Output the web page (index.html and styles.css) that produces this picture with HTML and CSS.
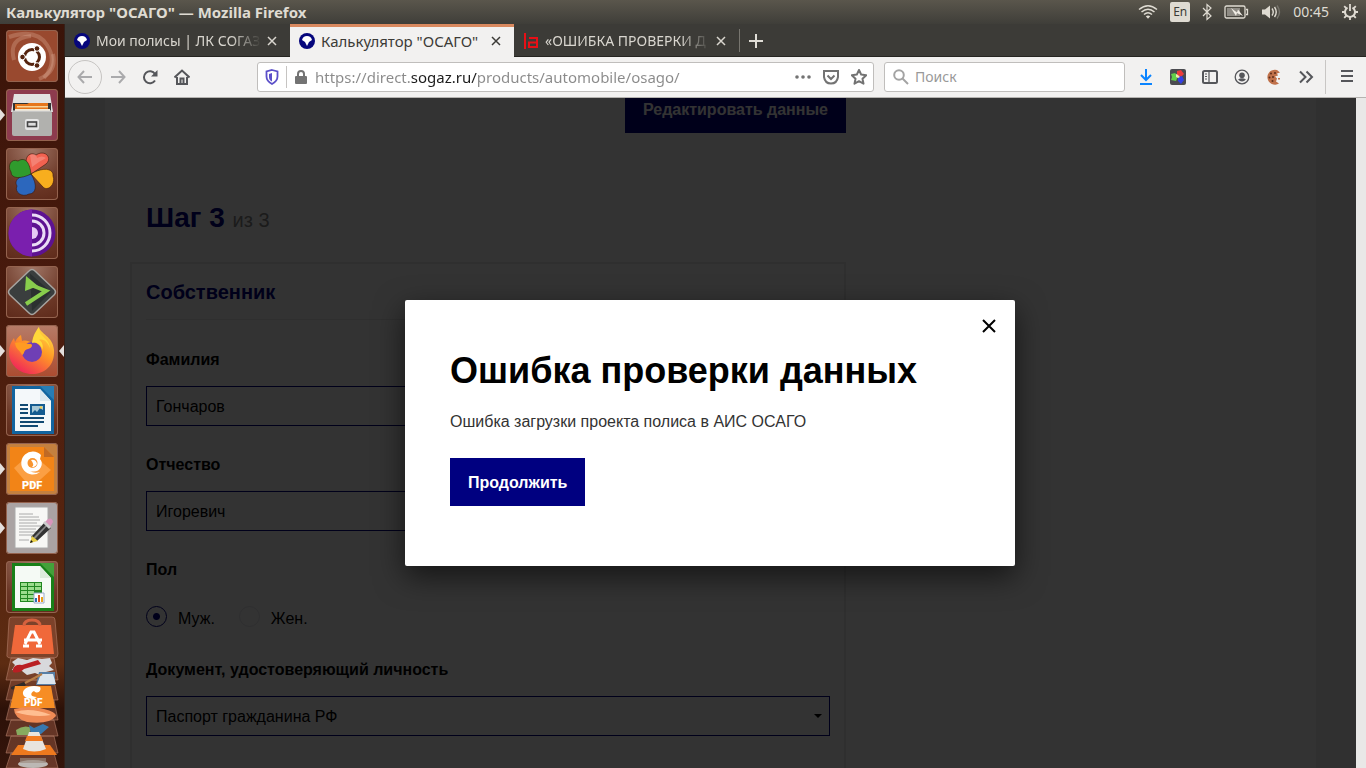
FILE: index.html
```html
<!DOCTYPE html>
<html lang="ru">
<head>
<meta charset="utf-8">
<title>Калькулятор "ОСАГО"</title>
<link rel="stylesheet" href="styles.css">
</head>
<body class="desktop">
<header class="topbar">
  <span class="topbar-title">Калькулятор "ОСАГО" — Mozilla Firefox</span>
  <div class="indicators">
    <svg class="ind-wifi" width="20" height="16" viewBox="0 0 20 16" fill="none" stroke="#dfdbd2" stroke-width="1.5"><path d="M1 5.500Q10-2 19 5.500M3.500 8Q10 2.500 16.500 8M6 10.500Q10 7 14 10.500"/><path d="M7.800 12.300Q10 10.500 12.200 12.300L10 14.800z" fill="#dfdbd2" stroke="none"/></svg>
    <span class="ind-lang">En</span>
    <svg width="10" height="18" viewBox="0 0 10 18" fill="none" stroke="#dfdbd2" stroke-width="1.200"><path d="M1 5l8 8-4 3.500v-15L9 5l-8 8"/></svg>
    <svg width="25" height="14" viewBox="0 0 25 14" fill="none" stroke="#dfdbd2" stroke-width="1.300"><rect x="1" y="1" width="20" height="12" rx="1.500"/><path d="M22 4.500h1.500v5H22"/><path d="M3 3h13v8H3z" fill="#8e8b84" stroke="none"/><path d="M7 3l6 4.500 1-3L19 11l-6-3-1 3z" fill="#f0ece4" stroke="none"/></svg>
    <svg width="20" height="16" viewBox="0 0 20 16"><path d="M1 5.500h3L9 1.500v13L4 10.500H1z" fill="#dfdbd2"/><g fill="none" stroke-width="1.400"><path d="M11 4.500Q13.500 8 11 11.500M13.500 3Q17 8 13.500 13" stroke="#dfdbd2"/><path d="M16 1.500Q21 8 16 14.500" stroke="#77746d"/></g></svg>
    <time class="clock">00:45</time>
    <svg width="18" height="18" viewBox="0 0 18 18" fill="none" stroke="#dfdbd2"><path d="M6.500 4.600a5 5 0 1 0 5 0" stroke-width="2"/><path d="M9 1v7M1 9h3M14 9h3M3.200 14.800l2.300-2.300M14.800 14.800l-2.300-2.300M3.200 3.200l2 2M14.800 3.200l-2 2M9 14v3" stroke-width="1.800"/></svg>
  </div>
</header>

<div class="workspace">
<nav class="launcher" aria-label="Панель запуска">
  <button class="tile tile-dash" aria-label="Поиск"><svg viewBox="0 0 52 52"><g fill="none" stroke="#e3b5a2" stroke-opacity=".3" stroke-width="4"><path d="M3 7Q30-2 41 15t-3 33"/><path d="M8 30Q2 8 25 6M47 24q4 18-14 25"/></g><circle cx="26" cy="27" r="14" fill="#fff"/><circle cx="26" cy="27" r="7.500" fill="none" stroke="#55240f" stroke-width="3"/><path d="M26 27l-12 0M26 27l6-11M26 27l6 11" stroke="#fff" stroke-width="2"/><circle cx="26" cy="27" r="5" fill="#fff"/><g fill="#55240f" stroke="#fff"><circle cx="16.500" cy="27" r="2.800"/><circle cx="31" cy="18.500" r="2.800"/><circle cx="31" cy="35.500" r="2.800"/></g></svg></button>
  <button class="tile tile-files running" aria-label="Файлы"><svg viewBox="0 0 52 52"><path d="M8 5h36l3 18H5z" fill="#e2e2e2"/><path d="M7 14h38v9H7z" fill="#333"/><path d="M9 15h12l2-1h19v8H9z" fill="#e6761c"/><path d="M11 17h31v1.500H11z" fill="#f9d49a"/><path d="M9 20h35v3H9z" fill="#f3ead5"/><rect x="6" y="22" width="40" height="25" rx="2" fill="#b1b1ae"/><path d="M6 22h40" stroke="#ddd"/><rect x="19" y="30" width="14" height="11" rx="2" fill="#e6e6e6"/><rect x="21.500" y="33" width="9" height="4.500" fill="#ddd" stroke="#444" stroke-width="1.600"/></svg></button>
  <button class="tile" aria-label="Клевер"><svg viewBox="0 0 52 52"><g stroke="#3b160b" stroke-width=".6"><path d="M25 26C15 13 22 2 30 7c9-6 17 3 10 9z" fill="#f26250"/><path d="M25 26C36 19 48 20 47 28c3 8-5 16-10 11z" fill="#f8ae1e"/><path d="M25 26c7 11 5 20-2 20-7 4-15-2-12-8-4-7 5-11 14-12z" fill="#2c67bd"/><path d="M25 26C15 31 5 31 5 24c-4-6 0-14 7-11 8-5 12 3 13 13z" fill="#2f9b2d"/></g><path d="M24 7q6-3 7 3 5-3 9 0-8 4-14 9z" fill="#fff" opacity=".2"/></svg></button>
  <button class="tile" aria-label="Tor Browser"><svg viewBox="0 0 52 52"><circle cx="26" cy="26" r="23.500" fill="#5d1291"/><path d="M26 2.500a23.500 23.500 0 0 0 0 47z" fill="#7a1fae"/><g fill="none" stroke="#eadcf5" stroke-width="3"><path d="M26 14a12 12 0 0 1 0 24M26 8a18 18 0 0 1 0 36"/></g><path d="M26 20a6 6 0 0 1 0 12z" fill="#e7caf5"/></svg></button>
  <button class="tile" aria-label="Терминал"><svg viewBox="0 0 52 52"><path d="M23 5q3-3 6 0l19 18q3 3 0 6L29 47q-3 3-6 0L4 29q-3-3 0-6z" fill="#3a3e3e" stroke="#a7a4a0" stroke-width="1.500"/><path d="M24 7.500L45 26 26 45z" fill="#2b3030"/><path d="M25 19l15 6-20 13" fill="none" stroke="#88cd4c" stroke-width="4"/><path d="M20 10l-1 15 13-5z" fill="#88cd4c"/></svg></button>
  <button class="tile tile-firefox running focused" aria-label="Firefox"><svg viewBox="0 0 52 52"><defs><linearGradient id="ff" x1=".9" y1="0" x2=".25" y2="1"><stop offset="0" stop-color="#ffe44a"/><stop offset=".45" stop-color="#ff9825"/><stop offset="1" stop-color="#f0225b"/></linearGradient></defs><path d="M33 2c1 7 14 9 15 23 1 16-10 24-22 24S3 40 3 27c0-6 2-10 5-14l1 4c2-4 4-6 6-7l1 6c4-1 7 0 10 2 2-6 4-11 7-16z" fill="url(#ff)"/><circle cx="26" cy="27" r="10" fill="#6f3fb5"/><path d="M26 18c4-2 10 2 10 7 2-4 0-9-3-10 5-2 9 3 11 8C43 12 33 13 33 2c-4 5-6 9-7 16z" fill="#ffd83a"/><path d="M9 18c6-2 9 1 16 1 2 1 1 4-3 5-5 1-3 5-6 6C14 25 10 25 9 18z" fill="#ff9b22"/></svg></button>
  <button class="tile" aria-label="LibreOffice Writer"><svg viewBox="0 0 52 52"><path d="M6 2h30l12 13v35H6z" fill="#12649f"/><path d="M9 5h25l11 12v30H9z" fill="#f4f8fa"/><path d="M34 2h14v14z" fill="#277db5"/><path d="M34 5v12h11z" fill="#dce8ef"/><g stroke="#124a73" stroke-width="2"><path d="M14 21h8M14 25h8M14 29h8M14 34h24M14 38h24M14 42h18"/></g><path d="M24 20h15v11H24z" fill="#155c91"/><path d="M26 22h11v4l-3-2-3 4-2-2-3 3z" fill="#a6c8d6"/><circle cx="35" cy="23.500" r="1.200" fill="#f7d04a"/></svg></button>
  <button class="tile tile-foxit running" aria-label="Foxit Reader"><svg viewBox="0 0 52 52"><path d="M4 4h34l10 10v34H4z" fill="#f28417"/><path d="M8 25l17-15 20 17-20 18z" fill="#fb9f43"/><path d="M38 4v10h10z" fill="#c06a25"/><path d="M35 12A11.500 11.500 0 1 0 34 29q-6 2-10-1 8 2 11-4 2-5-1-8z" fill="#fff"/><circle cx="26.500" cy="20" r="5" fill="#f8942f"/><path d="M25 17q5-1 6 4-2 4-5 3 3-2-1-7z" fill="#fff"/><text class="pdf-text" x="16" y="46" font-size="11">PDF</text></svg></button>
  <button class="tile tile-gedit running" aria-label="Текстовый редактор"><svg viewBox="0 0 52 52"><path d="M9 5h33v41H9z" fill="#f7f7f5" stroke="#aaa"/><g stroke="#aaa" stroke-width="1"><path d="M13 12h14M13 15h20M13 18h21M13 21h18M13 24h22M13 27h17M13 30h20M13 33h14M13 38h10"/></g><path d="M25 35l14-15 6 6-14 13z" fill="#333"/><path d="M27 36l14-14 1 1-13 14z" fill="#888"/><path d="M24 41l2-7 6 5z" fill="#e7cd45"/><path d="M24 41l1-3 2 2z" fill="#111"/><path d="M39 20l3-3q4-2 5 3l-3 5z" fill="#d995bb"/><path d="M37 21l2-2 6 6-2 2z" fill="#ccc"/></svg></button>
  <button class="tile" aria-label="LibreOffice Calc"><svg viewBox="0 0 52 52"><path d="M6 2h30l12 13v35H6z" fill="#188018"/><path d="M9 5h25l11 12v30H9z" fill="#f5faf5"/><path d="M34 2h14v14z" fill="#43a13a"/><path d="M34 5v12h11z" fill="#ddebdd"/><path d="M14 21h22v20H14z" fill="#218621"/><g fill="#9bdc8d"><path d="M15 22h6v3h-6zM22 22h6v3h-6zM29 22h6v3h-6zM15 26h6v3h-6zM22 26h6v3h-6zM29 26h6v3h-6zM15 30h6v3h-6zM22 30h6v3h-6zM15 34h6v3h-6zM22 34h6v3h-6zM15 38h6v2h-6zM22 38h6v2h-6z"/></g><path d="M28 32h10v10H28z" fill="#fff" stroke="#9ac"/><path d="M29 37h2v4h-2z" fill="#2d6db3"/><path d="M32 34h2v7h-2z" fill="#dc501b"/><path d="M35 36h2v5h-2z" fill="#e8a31a"/></svg></button>
  <button class="folded" aria-label="Другие приложения"><svg viewBox="0 0 60 152">
    <g fill="#a4604a" fill-opacity=".45" stroke="#b98570" stroke-opacity=".55"><path d="M10 1h40q3 0 3 3l3 34q0 4-4 4H9q-5 0-4-4L7 4q0-3 3-3z"/><path d="M9 42h43l4 22H4zM9 64h43l4 20H4zM9 84h43l4 20H4zM9 104h43l4 16H4zM9 120h43l4 17H4zM9 137h43l4 15H4z"/></g>
    <path d="M13 9h36l3 29H9z" fill="#f0683a"/><path d="M22 10q0-6 8-6t8 6" fill="none" stroke="#d6613e" stroke-width="3"/><g fill="none" stroke="#fff" stroke-width="3"><path d="M23 28l6-12h3l6 12M22 24h18M21 30h6M34 30h6"/></g>
    <path d="M16 42l9 2 6-2 9 1 8-1 2 5-3 3 5 4-8 2-4 4-7-3-8 2-5-4-10-1 3-5-3-3z" fill="#d8d9dc"/><path d="M11 53q2-5 9-4l16-5 3 4-17 5q-5 5-11 3z" fill="#b91f23"/>
    <path d="M37 56h16v13H34z" fill="#577fa6"/><path d="M39 58h12l3 10H35z" fill="#dce5ed"/><path d="M9 71l13-5 2 3q-7 6-15 4z" fill="#302c29"/><path d="M23 67l17-9" stroke="#b77d46" stroke-width="2"/>
    <path d="M13 70h36l4 22H8z" fill="#f78d24"/><path d="M38 71c-10-3-18 2-17 7 1 5 10 6 14 3-7 0-7-4-3-6 4 4 8-1 6-4z" fill="#fff"/><text class="pdf-text" x="22" y="90" font-size="10">PDF</text>
    <path d="M12 93q18-4 30 0 12 3 12 7-7 9-29 6-13-4-13-13z" fill="#ee8a55"/><path d="M13 96q16-5 36 3-17 3-36-3z" fill="#ffbe91"/>
    <path d="M14 114q8-6 16-2l-4 7H15z" fill="#87ab5f"/><path d="M27 109l5 3 9-4 6 3-8 7H29z" fill="#3878ae"/>
    <path d="M16 129h32l7 10H9z" fill="#ee791e"/><path d="M27 116h10l7 17q-12 5-23 0z" fill="#e8e3de"/><path d="M25 120h14l2 5H23z" fill="#f27b22"/>
    <ellipse cx="31" cy="148" rx="15" ry="4" fill="#bcb8b4"/><path d="M18 142h26v5H18z" fill="#9d8c80" opacity=".65"/>
  </svg></button>
</nav>

<main class="browser">
  <div class="tabs">
    <div class="tab">
      <svg class="fav" viewBox="0 0 16 16"><circle cx="8" cy="8" r="8" fill="#06067c"/><path d="M8 3q4 0 5 4l-3 2-2 4-2-4-3-2q1-4 5-4z" fill="#fff"/></svg>
      <button class="tab-label">Мои полисы | ЛК СОГАЗ</button>
      <button class="tab-close" aria-label="Закрыть вкладку"><svg viewBox="0 0 10 10"><path d="M1 1l8 8M9 1L1 9"/></svg></button>
    </div>
    <div class="tab tab-active">
      <svg class="fav" viewBox="0 0 16 16"><circle cx="8" cy="8" r="8" fill="#06067c"/><path d="M8 3q4 0 5 4l-3 2-2 4-2-4-3-2q1-4 5-4z" fill="#fff"/></svg>
      <button class="tab-label">Калькулятор "ОСАГО"</button>
      <button class="tab-close" aria-label="Закрыть вкладку"><svg viewBox="0 0 10 10"><path d="M1 1l8 8M9 1L1 9"/></svg></button>
    </div>
    <div class="tab">
      <svg class="fav" viewBox="0 0 16 16" fill="none" stroke="#e80f16" stroke-width="2"><path d="M2 0v16M6 5h8v9H6V9.500h8"/></svg>
      <button class="tab-label">«ОШИБКА ПРОВЕРКИ Д</button>
      <button class="tab-close" aria-label="Закрыть вкладку"><svg viewBox="0 0 10 10"><path d="M1 1l8 8M9 1L1 9"/></svg></button>
    </div>
    <button class="tab-new" aria-label="Новая вкладка"><svg width="14" height="14" viewBox="0 0 14 14"><path d="M7 0v14M0 7h14" stroke="#e0ddd6" stroke-width="2"/></svg></button>
  </div>

  <div class="toolbar">
    <button class="tool back" aria-label="Назад"><svg viewBox="0 0 16 16"><path d="M15 8H1.500M7 2L1.500 8 7 14"/></svg></button>
    <button class="tool faded" aria-label="Вперёд"><svg viewBox="0 0 16 16"><path d="M1 8h13.500M9 2l5.500 6L9 14"/></svg></button>
    <button class="tool" aria-label="Обновить"><svg viewBox="0 0 16 16"><path d="M13 11.500A6 6 0 1 1 13 5"/><path d="M15.500 1v6.500H9z" fill="#55565a" stroke="none"/></svg></button>
    <button class="tool" aria-label="Домой"><svg viewBox="0 0 16 16"><path d="M.5 8.500L8 1.500l7.500 7M3 8v7h10V8"/><path d="M6.500 15V9.500h3V15"/></svg></button>
    <div class="urlbar">
      <svg class="shield" width="14" height="16" viewBox="0 0 14 16"><path d="M7 1l5.500 1.500v5Q12.500 12 7 15 1.500 12 1.500 7.500v-5z" fill="none" stroke="#5b4fc9" stroke-width="1.800"/><path d="M7 4L4 5v3q0 3 3 4.500z" fill="#5b4fc9"/></svg>
      <span class="lock"><svg width="12" height="14" viewBox="0 0 12 14"><path d="M3 7V4q0-3 3-3t3 3v3" fill="none" stroke="#737373" stroke-width="2"/><rect y="6" width="12" height="8" rx="1" fill="#737373"/></svg></span>
      <input class="url" type="text" aria-label="Адрес" value="https://direct.sogaz.ru/products/automobile/osago/">
      <button class="tool" aria-label="Действия"><svg viewBox="0 0 16 16"><g fill="#737373" stroke="none"><circle cx="2" cy="8" r="1.800"/><circle cx="8" cy="8" r="1.800"/><circle cx="14" cy="8" r="1.800"/></g></svg></button>
      <button class="tool" aria-label="Pocket"><svg viewBox="0 0 16 16"><path d="M1 2h14v6q-1 6.500-7 6.500T1 8z" stroke="#737373"/><path d="M4.500 6.500L8 10l3.500-3.500" stroke="#737373"/></svg></button>
      <button class="tool" aria-label="Закладка"><svg viewBox="0 0 16 16"><path d="M8 1l2.200 4.600 5 .6-3.700 3.500 1 5L8 12.200l-4.500 2.500 1-5L.8 6.200l5-.6z" stroke="#737373" stroke-linejoin="round"/></svg></button>
    </div>
    <div class="searchbar">
      <svg width="16" height="16" viewBox="0 0 16 16" fill="none" stroke="#a3a3a3" stroke-width="2"><circle cx="6" cy="6" r="4.800"/><path d="M9.500 9.500L15 15"/></svg>
      <input class="search" type="text" aria-label="Поиск" placeholder="Поиск">
    </div>
    <div class="extras">
      <button class="tool" aria-label="Загрузки"><svg viewBox="0 0 16 16"><path d="M8 0v11M3 6l5 5 5-5M2 15h12" stroke="#0a84ff"/></svg></button>
      <button class="tool" aria-label="Расширение"><svg viewBox="0 0 16 16"><g stroke="none"><rect width="16" height="16" rx="2" fill="#4b4b50"/><path d="M1 5l4-1 3 3-2 5-5-1 1-3z" fill="#62ce49"/><path d="M7 2l4-1 3 4-3 3-4-2z" fill="#eb3b3c"/><path d="M8 8l4-1 2 4-3 4-3-3z" fill="#3340e5"/><path d="M6 5l2 1 2 2-2 1-2-1z" fill="#f0e8b0"/></g></svg></button>
      <button class="tool" aria-label="Боковая панель"><svg viewBox="0 0 16 16"><rect x="1" y="2" width="14" height="12" rx="1.500"/><path d="M7 2v12M3 5h2M3 7.500h2M3 10h2" stroke-width="1.200"/></svg></button>
      <button class="tool" aria-label="Учётная запись"><svg viewBox="0 0 16 16"><circle cx="8" cy="8" r="6.800" stroke-width="1.300"/><circle cx="8" cy="6.200" r="2.800" fill="#55565a" stroke="none"/><path d="M4 10.500q4-2.500 8 0-4 4-8 0z" fill="#55565a" stroke="none"/></svg></button>
      <button class="tool" aria-label="Cookie"><svg viewBox="0 0 16 16"><g stroke="none"><path d="M11 1A7.500 7.500 0 1 0 13 14.500l-3-2 1-3-2-2 3-1-1-2 3-1z" fill="#c0714a"/><g fill="#5d2c1a"><circle cx="5" cy="4.500" r="1"/><circle cx="9" cy="4" r="1"/><circle cx="3.500" cy="8.500" r="1"/><circle cx="7" cy="8" r="1"/><circle cx="6.500" cy="12" r="1"/></g><path d="M12 9h2v1.500h-2z" fill="#c0714a"/></g></svg></button>
      <button class="tool" aria-label="Ещё"><svg viewBox="0 0 16 16"><path d="M2 2.500L7.500 8 2 13.500M8.500 2.500L14 8l-5.500 5.500"/></svg></button>
    </div>
    <div class="menu-slot"><button class="tool" aria-label="Меню"><svg viewBox="0 0 16 16"><path d="M2 3h12M2 8h12M2 13h12"/></svg></button></div>
  </div>

  <div class="viewport">
    <div class="page">
      <form class="sheet">
        <div class="column">
          <div class="edit-row"><button class="btn" type="button">Редактировать данные</button></div>
          <h2 class="step">Шаг 3 <small class="step-of">из 3</small></h2>
          <section class="panel">
            <h3 class="panel-title">Собственник</h3>
            <div class="field"><label class="field-label" for="surname">Фамилия</label><input class="control" id="surname" type="text" value="Гончаров"></div>
            <div class="field"><label class="field-label" for="patronymic">Отчество</label><input class="control" id="patronymic" type="text" value="Игоревич"></div>
            <fieldset class="field gender">
              <legend class="field-label">Пол</legend>
              <div class="radios">
                <label class="radio"><input type="radio" name="gender" checked><span>Муж.</span></label>
                <label class="radio"><input type="radio" name="gender"><span>Жен.</span></label>
              </div>
            </fieldset>
            <div class="field"><label class="field-label" for="document">Документ, удостоверяющий личность</label>
              <div class="select-box"><select class="control" id="document"><option>Паспорт гражданина РФ</option></select><svg class="caret" width="8" height="4" viewBox="0 0 8 4"><path d="M0 0h8L4 4z"/></svg></div></div>
          </section>
        </div>
      </form>
      <div class="overlay">
        <div class="modal" role="dialog" aria-labelledby="modal-title">
          <button class="modal-close" aria-label="Закрыть"><svg viewBox="0 0 14 14"><path d="M1 1l12 12M13 1L1 13" stroke="#000" stroke-width="2"/></svg></button>
          <h1 class="modal-title" id="modal-title">Ошибка проверки данных</h1>
          <p class="modal-text">Ошибка загрузки проекта полиса в АИС ОСАГО</p>
          <button class="btn">Продолжить</button>
        </div>
      </div>
    </div>
    <div class="scrollbar"></div>
  </div>
</main>
</div>
</body>
</html>
```
FILE: styles.css
```css
* { box-sizing: border-box; }
button, input, select { font: inherit; color: inherit; }
button { padding: 0; border: 0; background: none; }
svg { display: block; flex: none; }

.desktop {
  margin: 0;
  height: 100vh;
  overflow: hidden;
  display: flex;
  flex-direction: column;
  font: 14px/20px "Noto Sans", "Open Sans", sans-serif;
  background: #3c3b37;
}

/* System panel */
.topbar {
  flex: none;
  height: 24px;
  padding: 0 7px 0 6px;
  display: flex;
  align-items: center;
  justify-content: space-between;
  color: #dfdbd2;
  background: linear-gradient(#5a564c, #3f3e39);
}
.topbar-title { font-weight: 700; font-size: 15px; }
.indicators { display: flex; align-items: center; gap: 12px; }
.ind-lang {
  width: 20px;
  border-radius: 2px;
  background: #dfdbd2;
  color: #3c3b37;
  font-size: 12px;
  text-align: center;
}

.workspace { flex: 1; min-height: 0; display: flex; }

/* Launcher */
.launcher {
  flex: none;
  width: 65px;
  padding-top: 6px;
  display: flex;
  flex-direction: column;
  gap: 7px;
  overflow: hidden;
  border-right: 1px solid #33211a;
  background: linear-gradient(#3a1409, #481a0d 35%, #55230f 65%, #5d2c12 86%, #2d1108 92%, #34150b);
}
.tile {
  position: relative;
  flex: none;
  width: 52px;
  height: 52px;
  margin-left: 6px;
  border-radius: 4px;
  background: radial-gradient(circle at 50% 0, #a17767, #6c3827 65%, #5e2a1a);
  box-shadow: inset 0 0 0 1px #94634f;
}
.tile-dash { background: #99492f; }
.tile-files { background: #8d3b4e; }
.tile-firefox { background: linear-gradient(#b67c68, #ac4c30); }
.tile-foxit { background: #c4803f; }
.tile-gedit { background: #aaa3a3; }
.running::before, .focused::after {
  content: "";
  position: absolute;
  top: 20px;
  border: 6px solid transparent;
}
.running::before { left: -6px; border-left: 5px solid #e4dfdc; border-right: 0; }
.focused::after { right: -6px; border-right: 5px solid #e4dfdc; border-left: 0; }
.folded { flex: none; width: 60px; height: 152px; margin: -4px 0 0 2px; }
.pdf-text { font-family: Roboto, sans-serif; font-weight: 900; fill: #fff; }

/* Browser chrome */
.browser { flex: 1; min-width: 0; display: flex; flex-direction: column; }
.tabs {
  flex: none;
  height: 33px;
  display: flex;
  color: #d9d6cf;
  border-bottom: 1px solid #262521;
}
.tab {
  width: 225px;
  padding: 1px 13px 0 9px;
  display: flex;
  align-items: center;
  gap: 6px;
}
.tab-active {
  width: 224px;
  font-size: 15px;
  color: #3c3b37;
  background: #f2f1f0;
  border-top: 3px solid #d9895f;
  padding-top: 0;
  padding-bottom: 3px;
  margin-bottom: -1px;
}
.fav { width: 16px; height: 16px; }
.tab-label {
  flex: 1;
  min-width: 0;
  overflow: hidden;
  white-space: nowrap;
  text-align: left;
  mask-image: linear-gradient(90deg, #000 82%, transparent);
}
.tab-active .tab-label { mask-image: none; }
.tab-close svg { width: 10px; height: 10px; fill: none; stroke: currentColor; stroke-width: 1.5; }
.tab-new {
  width: 33px;
  margin: 5px 0 4px;
  display: grid;
  place-items: center;
  border-left: 1px solid #77756f;
}
.toolbar {
  flex: none;
  height: 41px;
  padding: 0 0 0 3px;
  display: flex;
  align-items: center;
  background: #f2f1f0;
  border-bottom: 1px solid #b5b3b0;
}
.tool { flex: none; width: 32px; height: 32px; display: grid; place-items: center; }
.tool svg { width: 16px; height: 16px; fill: none; stroke: #55565a; stroke-width: 2; }
.tool.back { width: 34px; height: 34px; border: 1px solid #c6c4c2; border-radius: 50%; }
.back svg, .faded svg { opacity: .45; }
.urlbar, .searchbar {
  height: 30px;
  display: flex;
  align-items: center;
  background: #fff;
  border: 1px solid #c0bebc;
  border-radius: 3px;
}
.urlbar { flex: 608; margin-left: 59px; padding-left: 7px; }
.urlbar .tool { width: 28px; height: 28px; }
.shield { margin-right: 7px; }
.lock { padding: 4px 0 4px 8px; border-left: 1px solid #c6c4c2; }
.url, .search { flex: 1; min-width: 0; border: 0; outline: 0; background: none; }
.url {
  padding: 0 0 0 8px;
  font-size: 15px;
  color: transparent;
  background: linear-gradient(90deg, #8a8a8a 104px, #1c1c1c 104px 171px, #8a8a8a 171px) text;
}
.searchbar { flex: 231; margin-left: 10px; padding-left: 8px; gap: 6px; }
.search { padding: 0; }
.search::placeholder { color: #999; opacity: 1; }
.extras { display: flex; margin: 0 0 0 5px; }
.menu-slot { height: 34px; margin-left: 3px; padding-left: 5px; border-left: 1px solid #c8c6c4; width: 41px; }

/* Web page */
.viewport {
  flex: 1;
  min-height: 0;
  display: flex;
  font: 16px/20px "Liberation Sans", Arial, sans-serif;
}
.scrollbar { flex: none; width: 10px; background: #e9e8e7; }
.page { position: relative; flex: 1; overflow: hidden; padding: 0 40px; background: #f0f0f0; }
.sheet { min-height: 100%; background: #fff; padding-left: 25px; }
.column { max-width: 716px; margin-top: -13px; }
.edit-row { display: flex; justify-content: flex-end; }
.btn { height: 48px; padding: 2px 18px 0; background: #000080; color: #fff; font-weight: 700; }
.step { margin: 65px 0 22px 16px; font-size: 28px; line-height: 40px; color: #000080; }
.step-of { font-size: 20px; font-weight: 400; color: #888; }
.panel { padding: 0 14px 40px; border: 2px solid #ebebeb; }
.panel-title {
  margin: 0 0 28px;
  padding: 16px 0 15px;
  font-size: 20px;
  line-height: 24px;
  color: #000080;
  border-bottom: 1px solid #ebebeb;
}
.field { margin: 0 0 27px; padding: 0; border: 0; }
.field-label { display: block; padding: 0; margin-bottom: 14px; line-height: 24px; font-weight: 700; color: #000; }
.control {
  display: block;
  width: 100%;
  height: 40px;
  padding: 1px 9px 0;
  border: 1px solid #000080;
  border-radius: 0;
  background: #fff;
  appearance: none;
}
.select-box { display: grid; align-items: center; }
.select-box > * { grid-area: 1 / 1; }
.caret { justify-self: end; margin-right: 8px; pointer-events: none; }
.gender { margin-bottom: 26px; }
.gender .field-label { margin-bottom: 24px; }
.radios { display: flex; gap: 24px; }
.radio { display: flex; gap: 11px; line-height: 26px; }
.radio input {
  appearance: none;
  width: 21px;
  height: 21px;
  margin: 0;
  border: 1px solid #e4e4ec;
  border-radius: 50%;
}
.radio input:checked { border-color: #000080; background: radial-gradient(#000080 3px, transparent 4px); }

/* Modal */
.overlay {
  position: absolute;
  inset: 0;
  padding-right: 1px;
  display: grid;
  place-items: center;
  background: rgba(0, 0, 0, .8);
}
.modal {
  position: relative;
  width: 610px;
  padding: 46px 45px 60px;
  background: #fff;
  border-radius: 2px;
  box-shadow: 0 10px 30px rgba(0, 0, 0, .6);
}
.modal-close { position: absolute; top: 19px; right: 19px; }
.modal-close svg { width: 14px; height: 14px; }
.modal-title { margin: 0 0 16px; font-size: 36px; line-height: 50px; color: #000; }
.modal-text { margin: 0 0 26px; color: #333; }
```
